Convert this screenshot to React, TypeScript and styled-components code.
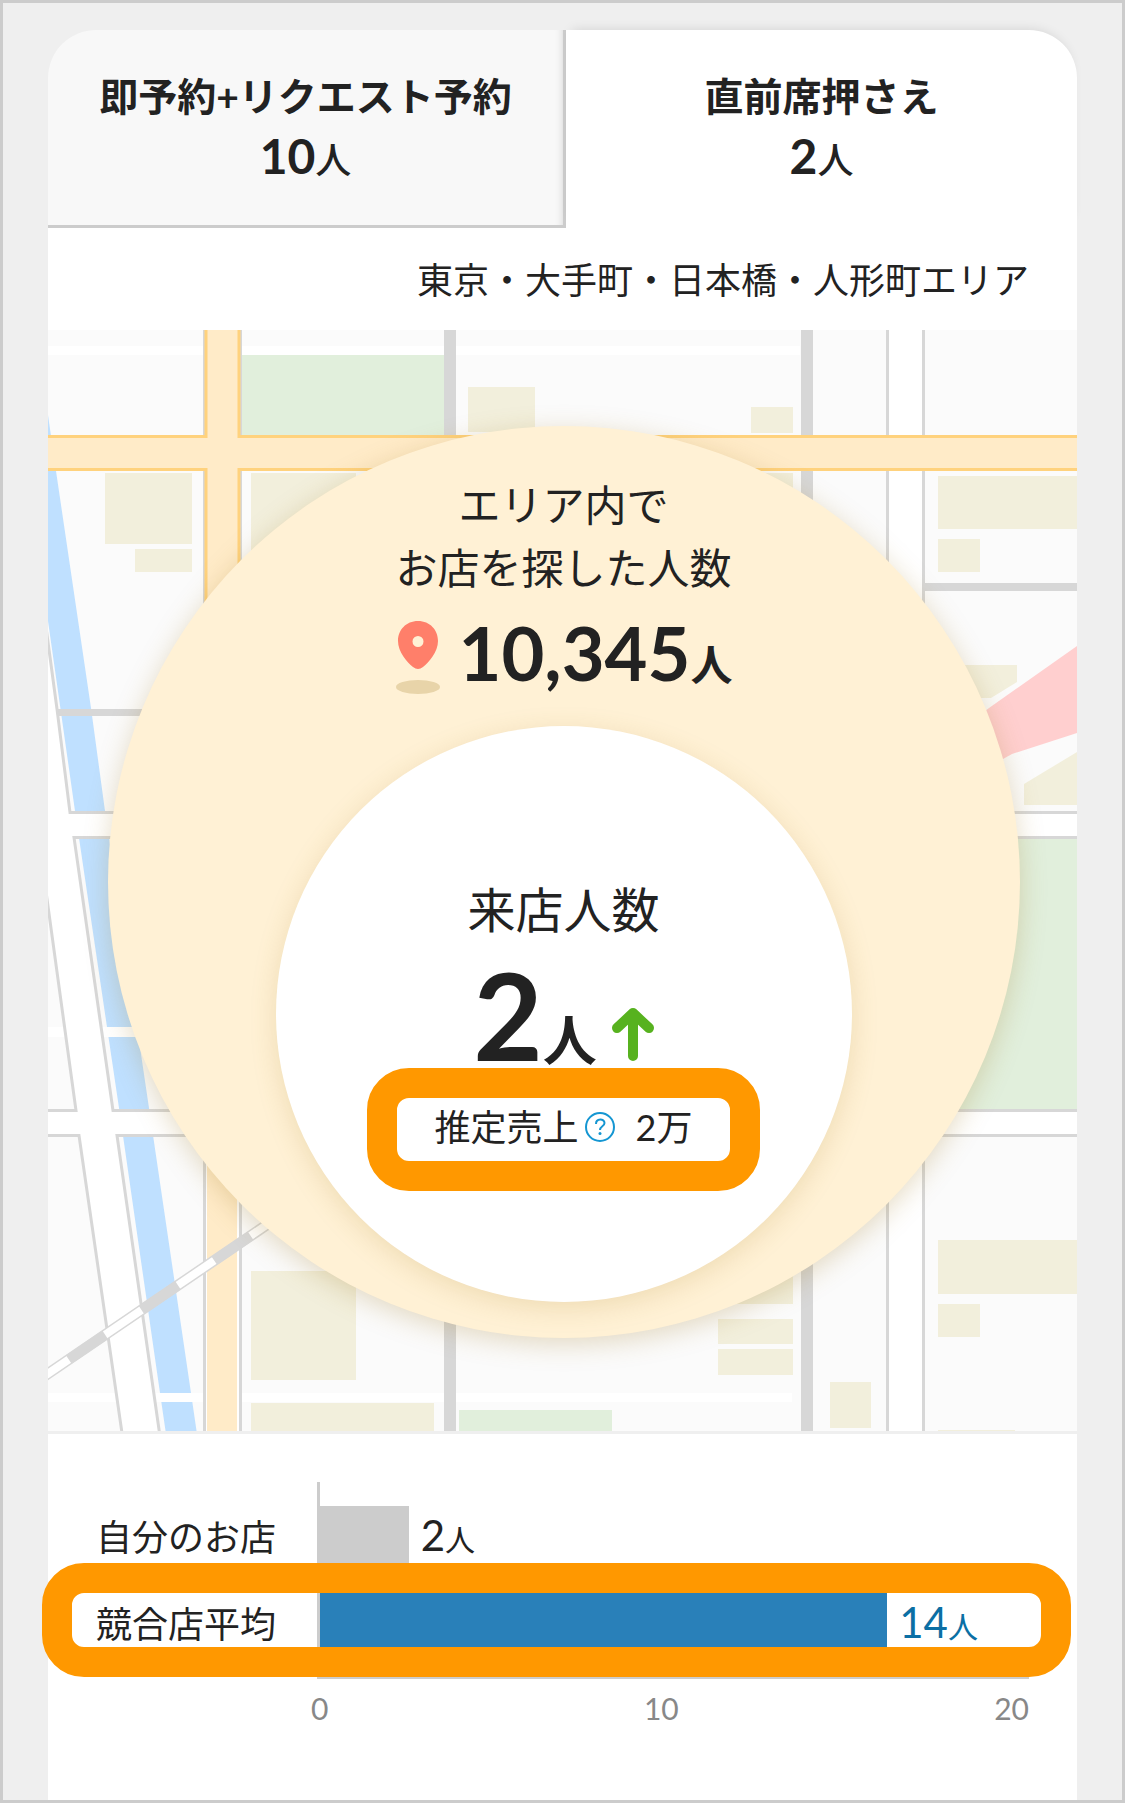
import React, { useState } from 'react'

import styled, { createGlobalStyle } from 'styled-components'

const GlobalStyle = createGlobalStyle`
  * {
    box-sizing: border-box;
  }

  body {
    margin: 0;
    background: #efefef;
    color: #222;
    font-family: Lato, 'Noto Sans CJK JP', sans-serif;
    font-weight: 400;
  }
`

const Frame = styled.div`
  display: flex;
  flex-direction: column;
  min-height: 100vh;
  padding: 27px 45px 0;
  border: 3px solid #ccc;
`

const Card = styled.main`
  display: flex;
  flex: 1;
  flex-direction: column;
  border-radius: 48px 48px 0 0;
`

const Tabs = styled.div`
  display: grid;
  grid-template-columns: 518fr 511fr;
`

const Tab = styled.button<{ $active: boolean; $side: 'left' | 'right' }>`
  height: 198px;
  padding: 0;
  border: 0 solid #ccc;
  border-width: ${({ $active }) => ($active ? '0 0 3px' : '0 3px 3px 0')};
  border-bottom-color: ${({ $active }) => ($active ? '#fff' : '#ccc')};
  border-radius: ${({ $side }) => ($side === 'left' ? '48px 0 0 0' : '0 48px 0 0')};
  background: ${({ $active }) => ($active ? '#fff' : '#f8f8f8')};
  box-shadow: ${({ $active }) => ($active ? '0 -6px 12px -6px rgba(0, 0, 0, 0.12)' : 'inset -9px 0 9px -9px rgba(0, 0, 0, 0.15)')};
  color: inherit;
  font-family: inherit;
  font-size: 39px;
  font-weight: 700;
  line-height: 60px;
  cursor: pointer;
`

const TabCount = styled.span`
  display: block;
  font-size: 48px;
`

const Unit = styled.small<{ $size: number; $weight?: number }>`
  font-size: ${({ $size }) => $size}px;
  font-weight: ${({ $weight }) => $weight || 'inherit'};
`

const Body = styled.div`
  position: relative;
  flex: 1;
  background: #fff;
`

const AreaName = styled.p`
  margin: 0;
  padding: 22px 48px 20px;
  font-size: 36px;
  line-height: 60px;
  text-align: right;
`

const MapArea = styled.section`
  position: relative;
  display: flex;
  justify-content: center;
  padding: 96px 0 93px 2px;
  border-bottom: 3px solid #efefef;
`

const MapDrawing = styled.svg`
  position: absolute;
  inset: 0;
  width: 100%;
  height: 100%;
`

const SearchCircle = styled.div`
  position: relative;
  display: flex;
  flex-direction: column;
  align-items: center;
  width: 912px;
  max-width: 100%;
  height: 912px;
  padding-top: 48px;
  border-radius: 50%;
  background: #fff1d5;
  box-shadow: 0 6px 27px rgba(160, 120, 30, 0.26);
`

const SearchLabel = styled.p`
  margin: 0;
  font-size: 42px;
  line-height: 63px;
  text-align: center;
`

const SearchCount = styled.div`
  display: flex;
  align-items: flex-end;
  gap: 18px;
  height: 95px;
  margin-bottom: 31px;
  font-size: 74px;
  font-weight: 700;
  line-height: 60px;
`

const VisitCircle = styled.div`
  display: flex;
  flex-direction: column;
  align-items: center;
  width: 576px;
  max-width: 100%;
  height: 576px;
  padding-top: 148px;
  border-radius: 50%;
  background: #fff;
  box-shadow: 0 6px 27px rgba(160, 120, 30, 0.18);
`

const VisitLabel = styled.p`
  margin: 0;
  font-size: 48px;
  line-height: 72px;
`

const VisitCount = styled.div`
  display: flex;
  align-items: baseline;
  gap: 15px;
  height: 122px;
  padding-top: 21px;
  font-size: 120px;
  font-weight: 700;
  line-height: 96px;
`

const Sales = styled.div`
  display: flex;
  align-items: center;
  justify-content: center;
  width: 393px;
  height: 123px;
  padding-bottom: 5px;
  border: 30px solid #ff9800;
  border-radius: 42px;
  font-size: 36px;
  line-height: 60px;
`

const HelpButton = styled.button`
  display: flex;
  margin: 0 21px 0 6px;
  padding: 0;
  border: 0;
  background: none;
  cursor: pointer;
`

const Chart = styled.section`
  padding: 48px;
`

const ChartRows = styled.div`
  position: relative;
  display: grid;
  grid-template-columns: 221px 1fr;
`

const ChartLabels = styled.div`
  display: grid;
  grid-auto-rows: 63px;
  gap: 24px;
  padding-top: 24px;
  font-size: 36px;
  line-height: 63px;
`

const Plot = styled.div`
  display: grid;
  grid-auto-rows: 63px;
  gap: 24px;
  padding: 24px 0 20px;
  border: solid #ccc;
  border-width: 0 0 3px 3px;
`

const BarRow = styled.div<{ $color: string }>`
  display: flex;
  align-items: center;
  gap: 12px;
  color: ${({ $color }) => $color};
  font-size: 42px;
  line-height: 63px;
`

const Bar = styled.div<{ $length: number; $color: string }>`
  width: ${({ $length }) => $length}%;
  height: 100%;
  background: ${({ $color }) => $color};
`

const Highlight = styled.div`
  position: absolute;
  inset: 81px -42px 2px -54px;
  border: 30px solid #ff9800;
  border-radius: 42px;
  pointer-events: none;
`

const Scale = styled.div`
  display: flex;
  justify-content: space-between;
  margin-left: 215px;
  padding-top: 11px;
  color: #888;
  font-size: 30px;
  line-height: 36px;
`

const tabs = [
  { label: '即予約+リクエスト予約', count: 10 },
  { label: '直前席押さえ', count: 2 },
]

const bars = [
  { label: '自分のお店', count: 2, length: 12.5, bar: '#ccc', text: '#222' },
  { label: '競合店平均', count: 14, length: 80, bar: '#2980b9', text: '#0b6fa4' },
]

// x, y, width, height
const buildings = [
  [468, 387, 67, 45],
  [751, 407, 42, 26],
  [105, 473, 87, 71],
  [135, 549, 57, 23],
  [251, 473, 105, 109],
  [718, 473, 75, 30],
  [938, 476, 150, 53],
  [938, 539, 42, 33],
  [251, 1271, 105, 109],
  [251, 1403, 183, 40],
  [718, 1270, 75, 34],
  [718, 1319, 75, 25],
  [718, 1349, 75, 26],
  [830, 1382, 41, 46],
  [938, 1240, 150, 54],
  [938, 1304, 42, 33],
  [938, 1430, 77, 10],
]

function TownMap() {
  return (
    <MapDrawing viewBox="48 330 1029 1101" preserveAspectRatio="xMidYMid slice" aria-hidden="true">
      <rect x="48" y="330" width="1029" height="1101" fill="#fbfbfb" />
      <path d="M48 346H800V355H48zM48 1393H792V1402H48z" fill="#fff" />
      {/* parks */}
      <path d="M242 355H444V435H242zM925 838H1090V1110H925zM459 1410H612V1440H459z" fill="#e1efdc" />
      <g fill="#f2efdc">
        {buildings.map(([x, y, w, h]) => (
          <rect key={`${x}-${y}`} x={x} y={y} width={w} height={h} />
        ))}
        <path d="M940 665H1017V682L991 698H940zM1077 752L1024 784V805H1077z" />
      </g>
      <path d="M1077 646L989 708L960 730V780L1003 759L1012 754L1077 733z" fill="#ffcfcf" />
      {/* river with its bridges */}
      <path
        d="M48 415L56 471L91 708L105 811L149 1108L191 1393L197 1434H166L160 1393L119 1108L75 811L48 621z"
        fill="#bfe0ff"
      />
      <path d="M48 1027H160V1037H48zM48 1393H203V1402H48z" fill="#fff" />
      {/* narrow roads */}
      <path d="M57 709H160V716H57zM925 583H1077V591H925zM444 330H456V1431H444zM801 330H813V1431H801z" fill="#d7d7d7" />
      <path d="M887.5 320V1440H923.5V320z" fill="#fff" stroke="#d7d7d7" strokeWidth="3" />
      <path d="M204.5 320V1440H240.5V320z" fill="#fff" stroke="#d7d7d7" strokeWidth="3" />
      <rect x="207" y="320" width="30" height="1120" fill="#ffebc8" />
      {/* wide roads */}
      <path
        d="M40 583L57 709L70 812.5H1090V837.5H74L113 1110.5H1090V1135.5H117L160.500 1440H123L79 1135.500H40V1110.500H76L40 848z"
        fill="#fff"
        stroke="#d7d7d7"
        strokeWidth="3"
      />
      <path d="M206 320V436.500H40V469.500H206V800H239V469.500H1090V436.500H239V320z" fill="#ffebc8" stroke="#ffd27d" strokeWidth="3" />
      {/* railway */}
      <path d="M-4 1409L290 1209" stroke="#d7d7d7" strokeWidth="11" />
      <path d="M-4 1409L290 1209" stroke="#fff" strokeWidth="8" />
      <path d="M-4 1409L290 1209" stroke="#d7d7d7" strokeWidth="10" strokeDasharray="44 44" />
    </MapDrawing>
  )
}

function PinIcon() {
  return (
    <svg width="46" height="74" viewBox="0 0 46 74" aria-hidden="true">
      <ellipse cx="23" cy="66" rx="22" ry="7" fill="#e8d4a9" />
      <path
        d="M23 0C11 0 3 9 3 20c0 11 9 21 15 26q5 4 10 0c6-5 15-15 15-26C43 9 35 0 23 0zm0 15a5.500 5.500 0 1 1 0 11 5.500 5.500 0 0 1 0-11z"
        fill="#ff7f6a"
        fillRule="evenodd"
      />
    </svg>
  )
}

function UpIcon() {
  return (
    <svg width="42" height="54" viewBox="0 0 42 54" fill="none" stroke="#57b21f" strokeWidth="10" aria-label="増加">
      <path d="M21 49V7M5 21L21 6L37 21" strokeLinecap="round" strokeLinejoin="round" />
    </svg>
  )
}

function HelpIcon() {
  return (
    <svg width="30" height="30" viewBox="0 0 30 30" fill="none" stroke="#1496d2" aria-hidden="true">
      <circle cx="15" cy="15" r="14" strokeWidth="2" />
      <path d="M11 12c0-6 8.500-5.500 8.500-1 0 3.500-4.500 3-4.500 7" strokeWidth="2" />
      <circle cx="15" cy="21.500" r="1.500" fill="#1496d2" stroke="none" />
    </svg>
  )
}

export default function App() {

  const [selected, setSelected] = useState(1);

  return (<>
    <GlobalStyle />
    <Frame>
      <Card>
        <Tabs role="tablist">
          {tabs.map((tab, i) => (
            <Tab
              key={tab.label}
              role="tab"
              aria-selected={selected === i}
              $active={selected === i}
              $side={i === 0 ? 'left' : 'right'}
              onClick={() => setSelected(i)}
            >
              {tab.label}
              <TabCount>{tab.count}<Unit $size={36} $weight={500}>人</Unit></TabCount>
            </Tab>
          ))}
        </Tabs>
        <Body>
          <AreaName>東京・大手町・日本橋・人形町エリア</AreaName>
          <MapArea>
            <TownMap />
            <SearchCircle>
              <SearchLabel>エリア内で<br />お店を探した人数</SearchLabel>
              <SearchCount>
                <PinIcon />
                <span>10,345<Unit $size={42}>人</Unit></span>
              </SearchCount>
              <VisitCircle>
                <VisitLabel>来店人数</VisitLabel>
                <VisitCount>
                  <span>2<Unit $size={54}>人</Unit></span>
                  <UpIcon />
                </VisitCount>
                <Sales>
                  推定売上
                  <HelpButton aria-label="推定売上について"><HelpIcon /></HelpButton>
                  2万
                </Sales>
              </VisitCircle>
            </SearchCircle>
          </MapArea>
          <Chart>
            <ChartRows>
              <ChartLabels>
                {bars.map((bar) => <div key={bar.label}>{bar.label}</div>)}
              </ChartLabels>
              <Plot>
                {bars.map((bar) => (
                  <BarRow key={bar.label} $color={bar.text}>
                    <Bar $length={bar.length} $color={bar.bar} />
                    <span>{bar.count}<Unit $size={30}>人</Unit></span>
                  </BarRow>
                ))}
              </Plot>
              <Highlight />
            </ChartRows>
            <Scale>
              <span>0</span>
              <span>10</span>
              <span>20</span>
            </Scale>
          </Chart>
        </Body>
      </Card>
    </Frame>
  </>)
}
